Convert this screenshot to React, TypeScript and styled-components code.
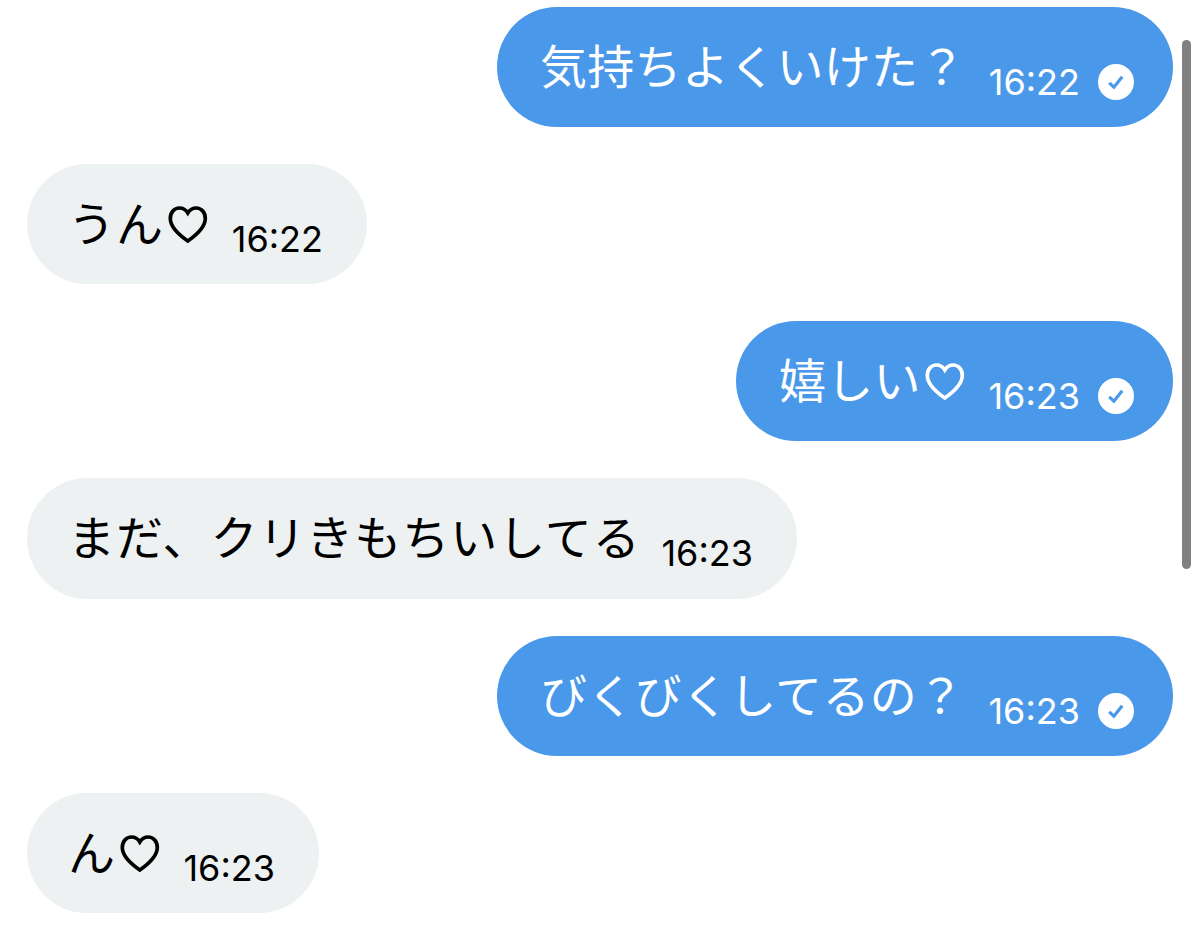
import styled, {createGlobalStyle} from "styled-components";

const GlobalStyle = createGlobalStyle`
  body {
    margin: 0;
    background: #fff;
    overflow: hidden;
  }
`
const Screen = styled.main`
  display: flex;
  width: 1200px;
  height: 931px;
  overflow: hidden;
  font-family: Inter, "Noto Sans CJK JP", sans-serif;
`
const Messages = styled.div`
  display: flex;
  flex-direction: column;
  gap: 37px;
  width: 1146px;
  padding: 7px 9px 0 27px;
`
const Bubble = styled.div<{ $mine: boolean, $width: number }>`
  display: flex;
  box-sizing: border-box;
  flex-shrink: 0;
  justify-content: space-between;
  align-self: ${p => p.$mine ? 'flex-end' : 'flex-start'};
  width: ${p => p.$width}px;
  height: 120.15px;
  padding: 0 ${p => p.$mine ? 39 : 44}px 0 ${p => p.$mine ? 43 : 41}px;
  border-radius: 61px;
  background: ${p => p.$mine ? '#4a98e9' : '#edf1f2'};
  color: ${p => p.$mine ? '#fff' : '#000'};
  letter-spacing: ${p => p.$mine ? 0.3 : 0.95}px;
`
const Text = styled.div`
  display: flex;
  align-items: center;
  height: 113px;
  font-family: "Noto Sans CJK JP", sans-serif;
  font-size: 47px;
  font-weight: 400;
  line-height: 113px;
  white-space: nowrap;
`
const HeartIcon = styled.svg`
  width: 42px;
  height: 40px;
  margin: 7px 0 0 3px;
`
const Meta = styled.div`
  display: flex;
  align-items: center;
  gap: 18px;
  box-sizing: border-box;
  height: 120px;
  padding-top: 30px;
  font-size: 36px;
  letter-spacing: 0;
`
const Colon = styled.span`
  vertical-align: 4px;
  line-height: 0;
`
const CheckIcon = styled.svg`
  width: 36px;
  height: 36px;
`
const Scrollbar = styled.div`
  width: 9px;
  height: 529px;
  margin-top: 40px;
  border-radius: 5px;
  background: #808080;
`
type Message = {
    text: string,
    heart?: boolean,
    time: string,
    mine: boolean,
    width: number,
}
const messages: Message[] = [
    {text: '気持ちよくいけた？', time: '16:22', mine: true, width: 676},
    {text: 'うん', heart: true, time: '16:22', mine: false, width: 340},
    {text: '嬉しい', heart: true, time: '16:23', mine: true, width: 437},
    {text: 'まだ、クリきもちいしてる', time: '16:23', mine: false, width: 770},
    {text: 'びくびくしてるの？', time: '16:23', mine: true, width: 676},
    {text: 'ん', heart: true, time: '16:23', mine: false, width: 292},
]

const Heart = () => <HeartIcon viewBox="0 0 42 40" fill="none">
    <path d="M20.8 37C13 31.6 3.3 24 3.3 14.5C3.3 8.4 7.2 4 12.4 4C15.9 4 18.8 5.8 20.8 9C22.8 5.8 25.7 4 29.2 4C34.4 4 38.3 8.4 38.3 14.5C38.3 24 28.6 31.6 20.8 37Z"
          stroke="currentColor" strokeWidth="3.7" strokeLinejoin="miter"/>
</HeartIcon>

const Check = () => <CheckIcon viewBox="0 0 36 36" fill="none">
    <circle cx="18" cy="18" r="18" fill="#fff"/>
    <path d="M11.2 18.8L15.9 23.2L24.2 12.8" stroke="#4a98e9" strokeWidth="3.2"/>
</CheckIcon>

const Time = (props: { value: string }) => {
    const [hours, minutes] = props.value.split(':')
    return <div>{hours}<Colon>:</Colon>{minutes}</div>
}

const App = () => {
    return <Screen>
        <GlobalStyle/>
        <Messages>
            {messages.map((m, i) =>
                <Bubble key={i} $mine={m.mine} $width={m.width}>
                    <Text>{m.text}{m.heart && <Heart/>}</Text>
                    <Meta><Time value={m.time}/>{m.mine && <Check/>}</Meta>
                </Bubble>
            )}
        </Messages>
        <Scrollbar/>
    </Screen>
}

export default App
